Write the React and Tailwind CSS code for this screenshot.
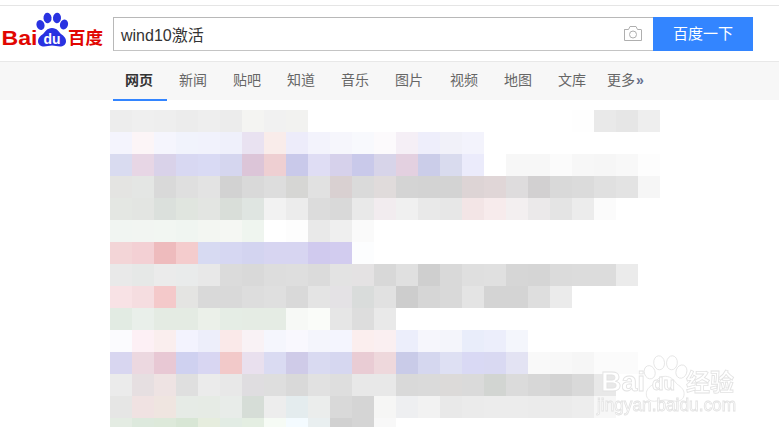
import React from 'react';

const tabs = ['网页', '新闻', '贴吧', '知道', '音乐', '图片', '视频', '地图', '文库'];

// blurred result rows, one row per 22px band, 22px cells, empty cells are white
const rows = [
  'ededed efefef eeeeee ececec eeeeee ececec f4f4f2 f1f1f1 f2f2f0 fff fff fff fff fff fff fff fff fff fff fff fff fefefe e9e9e9 e6e6e6 eeeeee',
  'f4f4fd fcf5f7 f5f5fd f1f3fc f1f2fc eff0fb e9e2f1 f9ecea edecfa f3f3fc f6f6fc f8f9fd fcfafc f5eff6 eeeefb f1f1f9 f3f3fc',
  'd9dbf0 e7d6e5 d9d2e9 d8d8f2 d9daf4 d5d6ef dcc5d8 eecfd2 c9c9ea dfddf4 d6d1eb c9c9ea d7d4e9 e3d0e0 cbcde9 d9dbee ebebfb fff f7f7f7 f7f7f7 fbfbfb f7f7f7 f6f6f6 f8f8f8 fdfdfd',
  'e4e4e2 e4e6e4 d9d9d9 dfdfdf e3e3e3 d2d2d2 d9d9d9 dddddd d6d6d4 e1e1e1 d9d0d1 dadada e0dbdb d4d4d4 d3d3d3 d3d3d3 ddd4d5 e0d6d7 dedcdd d2d0d1 d9d9d9 dbdbdb e0e0e0 e3e3e3 f6f6f6',
  'e4e7e3 e3e5e2 dbe0dc e0e5df e3e5e2 d9ded9 dfe5e1 f2f2f2 ececec dcdcdc d9d9d9 e9e9e9 f2ecef f0f0f0 e9e9e9 e7e7e7 f3e5e6 f7ebec f3eff0 ebe9ea e4e4e4 ececec fbfbfb',
  'f1f5f2 f2f5f2 f2f6f2 f0f5f1 f3f6f2 f5f7f3 eff5ef ffffff fdfdfd e9e9e9 efefef fafafa',
  'f3d5d7 f3d0d4 eebbbd f4cccd d7daf2 d6d7f2 d3d4f0 d7d5f1 d7d5f1 d0caee d2ccef fcfdfe',
  'e9e9e9 e6e8e7 ebebeb e9ebeb e8e8e8 dbdbdb d9d9d9 dddddd dedede dbdbdb e3e3e3 e4e2e3 d8d8d8 e0e0e0 cfcfcf d9d9d9 dfdfdf e0e0e0 d6d6d6 d5d5d5 dbdbdb dcdcdc dcdcdc ebebeb',
  'f8e2e5 f5dde0 f4c9ca e4e4e2 d9d9d9 d9d9d9 dddddd dfdfdf d9d9d9 e4e4e4 e4e2e5 d9dcdb e1e1e1 cdcdcd d6d6d6 d9d9d9 e4e4e4 d4d4d4 d4d4d4 dedede ebebeb',
  'e2ebe3 e9efea e4ebe3 e4ebe3 ebf0e9 e5ede5 e5ece4 e5ece4 f7f9f6 fafcf9 e6e6e6 dddddd e9e9e9',
  'fbfbfe fdf0f5 faeeee f3f3fe edeefa fae9e9 f9f2f5 f5f6fd f9f8fe f4f5fc f4f5fe fbeeee faeff1 eceefb f6f6fc f4f5fb e9edfa eceefb f4f6fc',
  'd8d6f0 ecd8e0 e8c8d4 cfd1f0 d8d6f2 f2c9c9 e9e0ee dadbf2 cfcbe8 d9daf1 d6d7f0 e9ccd4 eed8dc c9cbe8 d5d7ef dee0f3 d9d9f4 d9d9f2 e3e3f3 f9f9f9 f8f8f8 f6f6f6 fbfbfb fbfbfb',
  'ebebeb e6dfe1 eee3e3 dfdfdf ebebeb e8e8e8 dfdde0 dedede d9d9d9 e1e1e1 dedede e8e8e8 e8e8e8 d9d9d9 dadada dcdad9 dadada d2d5d2 dbdbdb d7d7d7 d3d3d3 d9d9d9 e8e8e8',
  'e6e6e5 f0e2e2 efe5e0 e6ebe6 e6ebe5 e8ece9 d6ddd7 ededed e4ecee ebedec d9d9d9 d5d5d5 f6f6f5 eeeff1 f2f2f2 e9e9e9 ebebeb ececec ececec ebebeb ebebeb ededed f7f7f7',
  'e4ece3 dde9dd dde9da d8e6d5 e6edde e2ece4 e4eee2 f6fbf5 f4fbff e9eff0 d1d1d1 d5d5d5 f8f8f8',
];

function Paw(props) {
  return (
    <g {...props}>
      <ellipse cx="40.5" cy="25" rx="4" ry="5" transform="rotate(-18 40.5 25)" />
      <ellipse cx="47.5" cy="18" rx="4" ry="5.2" transform="rotate(-6 47.5 18)" />
      <ellipse cx="57" cy="18" rx="4" ry="5.2" transform="rotate(6 57 18)" />
      <ellipse cx="64" cy="24.5" rx="4" ry="5" transform="rotate(18 64 24.5)" />
      <path d="M52 28c-5 0-7 4-9 6-3 2-5 4-5 7 0 4 3 5.500 6 5.500 3 0 5-1 8-1s5 1 8 1c3 0 6-1.500 6-5.500 0-3-2-5-5-7-2-2-4-6-9-6z" />
    </g>
  );
}

function Logo() {
  return (
    <svg width="113" height="55" viewBox="0 6 113 55" className="shrink-0">
      <text x="1.5" y="44.5" fill="#e10601" textLength="36" lengthAdjust="spacingAndGlyphs" className="font-['Liberation_Sans'] font-bold text-[20px]">Bai</text>
      <Paw fill="#2932e1" />
      <text x="43.5" y="43.5" fill="#fff" textLength="17" lengthAdjust="spacingAndGlyphs" className="font-['Liberation_Sans'] font-bold text-[15px]">du</text>
      <text x="68" y="44" fill="#e10601" className="font-['Noto_Sans_CJK_SC'] font-bold text-[17.5px]">百度</text>
    </svg>
  );
}

function Camera() {
  return (
    <svg width="20" height="18" viewBox="0 0 20 18" fill="none" stroke="#afafaf" strokeWidth="1" className="mb-[3px] shrink-0">
      <path d="M1.5 5.500h4l1.500-3h6l1.500 3h3.500a.5.5 0 0 1 .5.5v10.500h-17V6a.5.5 0 0 1 .5-.5z" />
      <circle cx="10" cy="10.500" r="3.500" />
    </svg>
  );
}

function Watermark() {
  return (
    <svg width="189" height="89" viewBox="590 345 189 89" className="absolute left-[590px] top-[345px] blur-[0.3px]" stroke="#e2e2e2" strokeWidth="0.8" fill="#fff">
      <text x="601" y="391" textLength="44" lengthAdjust="spacingAndGlyphs" className="font-['Liberation_Sans'] font-bold text-[27px]">Bai</text>
      <Paw transform="translate(595 338.5) scale(1.35)" strokeWidth="0.6" />
      <text x="652" y="390" textLength="23" lengthAdjust="spacingAndGlyphs" className="font-['Liberation_Sans'] font-bold text-[19px]">du</text>
      <text x="686" y="391" className="font-['Noto_Sans_CJK_SC'] font-bold text-[24px]">经验</text>
      <text x="597" y="411" textLength="139" lengthAdjust="spacingAndGlyphs" className="font-['Liberation_Sans'] text-[18px]">jingyan.baidu.com</text>
    </svg>
  );
}

export default function App() {
  return (
    <div className="relative h-[434px] w-[779px] overflow-hidden bg-white pt-[5px] font-['Liberation_Sans','Noto_Sans_CJK_SC',sans-serif]">
      <div className="flex h-[56px] border-t border-[#e5e5e5]">
        <Logo />
        <div className="mt-[11px] flex h-[34px] w-[540px] items-center justify-between border border-r-0 border-[#b8b8b8] border-b-[#c4c4c4] pl-[7px] pr-[10px]">
          <span className="pt-[3px] text-[16px] text-[#333]">wind10激活</span>
          <Camera />
        </div>
        <button className="mt-[11px] h-[34px] w-[100px] bg-[#3385ff] text-center text-[15px] text-white">百度一下</button>
      </div>

      <div className="flex h-[39px] border-t border-[#e8e8e8] bg-[#f7f7f7] pl-[113px]">
        {tabs.map((tab, idx) => (
          <div
            key={tab}
            className={
              idx === 0
                ? 'h-[39px] w-[54px] border-b-2 border-[#3385ff] pl-[12px] pt-[8px] text-[14px] font-bold text-[#333]'
                : idx === 6
                  ? 'ml-[1px] h-[38px] w-[54px] pl-[12px] pt-[8px] text-[14px] text-[#666]'
                  : 'h-[38px] w-[54px] pl-[12px] pt-[8px] text-[14px] text-[#666]'
            }
          >
            {tab}
          </div>
        ))}
        <div className="ml-[7px] pt-[8px] text-[14px] text-[#666]">
          更多<span className="ml-[1px] font-bold text-[#64708f]">»</span>
        </div>
      </div>

      <div className="ml-[110px] mt-[10px] grid h-[317px] w-[550px] grid-cols-[repeat(25,22px)] auto-rows-[22px] overflow-hidden">
        {rows.flatMap((row, r) =>
          row.split(' ').concat(Array(25).fill('fff')).slice(0, 25).map((color, c) => (
            <div key={`${r}-${c}`} style={{ backgroundColor: `#${color}` }} />
          ))
        )}
      </div>

      <Watermark />
    </div>
  );
}
